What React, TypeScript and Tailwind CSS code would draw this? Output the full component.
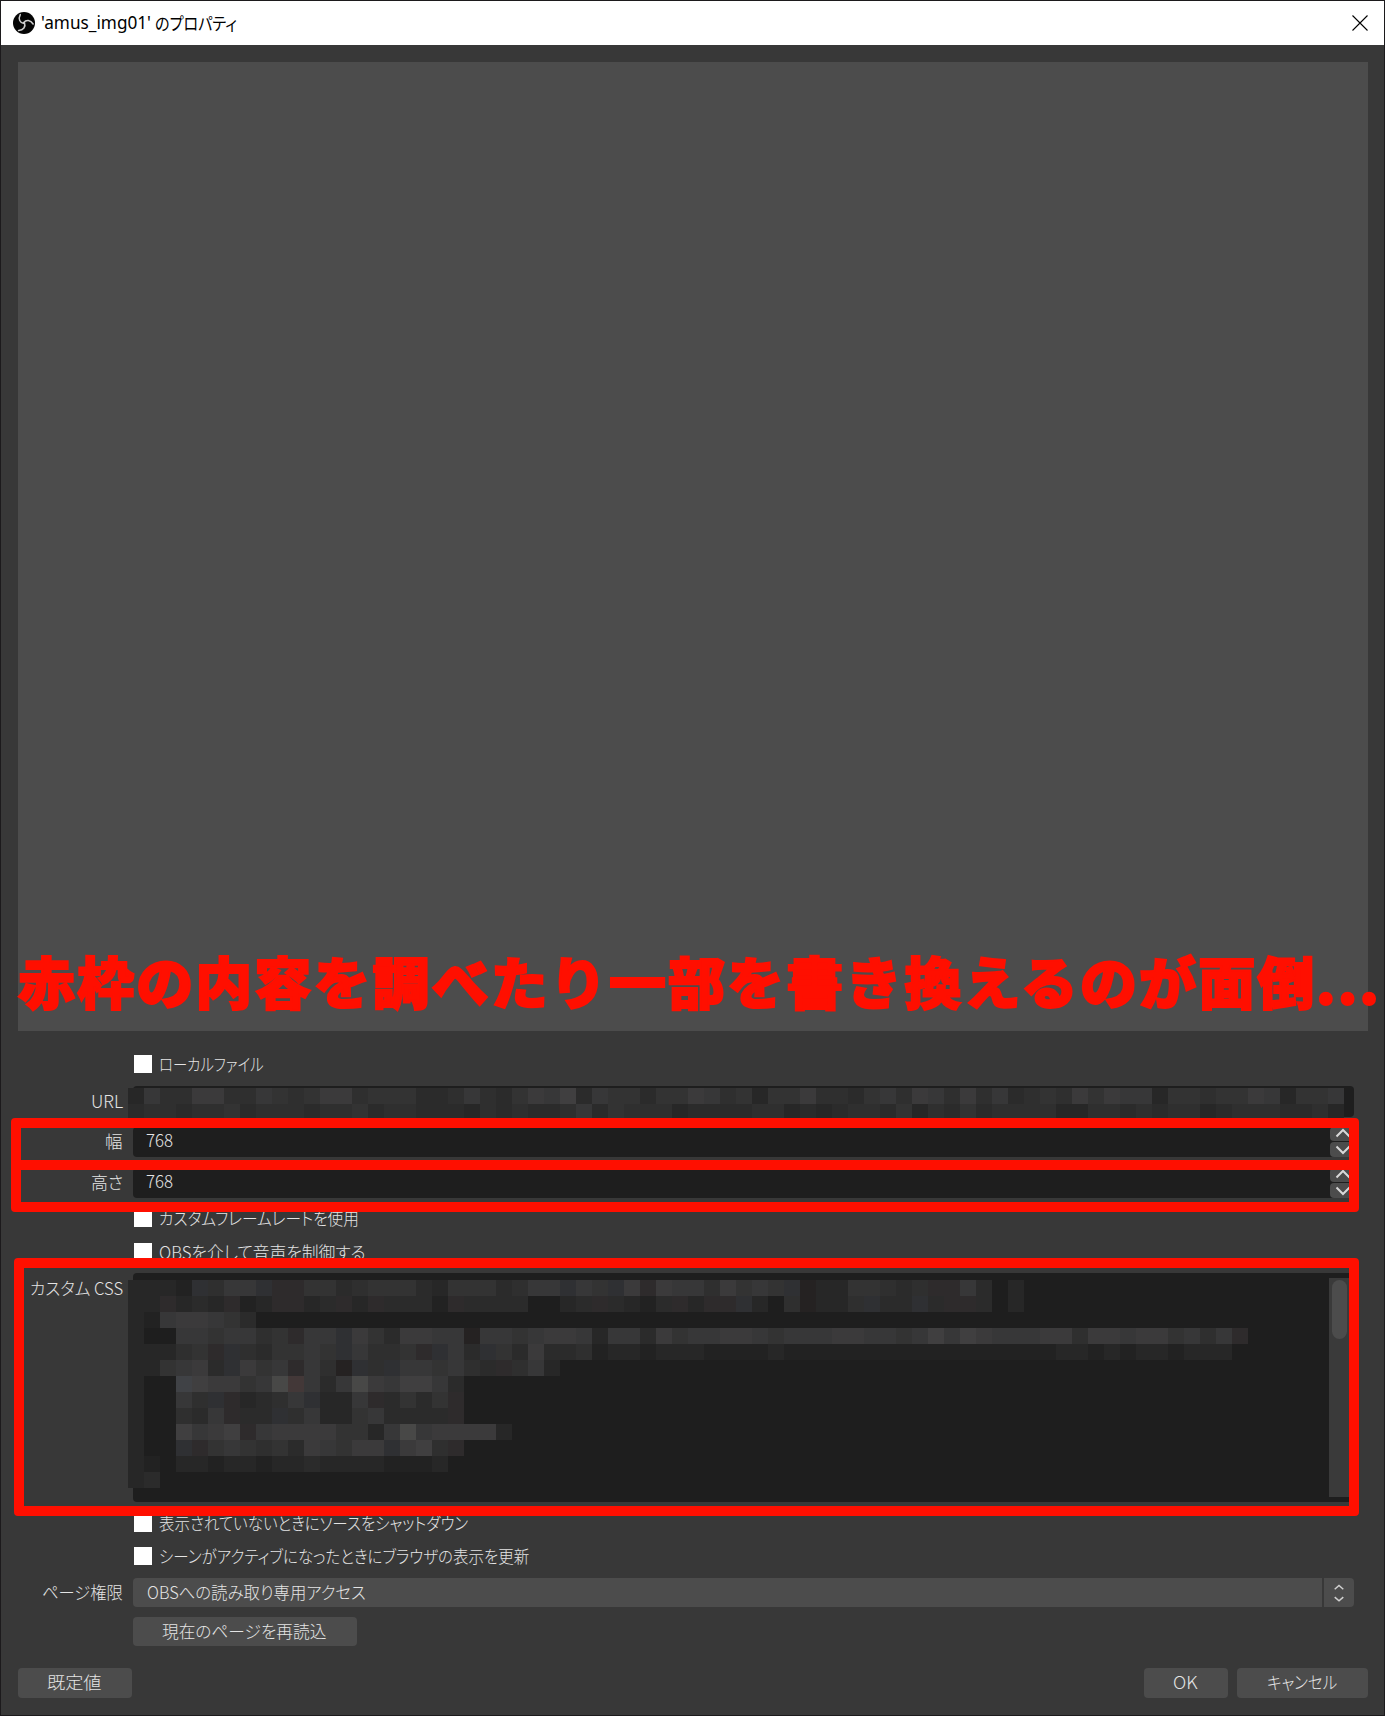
import { useLayoutEffect, useRef, useState } from "react";
import type { ReactNode } from "react";

/** Single line of text condensed or widened to an exact width. */
function Fit({ w, children, className = "pb-0.5" }: { w: number; children: string; className?: string }) {
  const ref = useRef<HTMLSpanElement>(null);
  const [scale, setScale] = useState(1);
  useLayoutEffect(() => {
    if (ref.current) setScale(w / ref.current.offsetWidth);
  }, [w]);
  return (
    <span className={`flex shrink-0 items-center ${className}`} style={{ width: w }}>
      <span
        ref={ref}
        className="block shrink-0 origin-left whitespace-pre"
        style={{ transform: `scaleX(${scale})` }}
      >
        {children}
      </span>
    </span>
  );
}

const SHADES: Record<string, string> = {
  ".": "transparent",
  "0": "#222222",
  "1": "#272727",
  "2": "#2b2b2b",
  "3": "#2f2f2f",
  "4": "#333333",
  "5": "#373738",
  "6": "#3b3a3b",
  "7": "#403f40",
  "8": "#484847",
  b: "#2f3033",
  r: "#2e2b2c",
  q: "#252222",
  B: "#404246",
  R: "#433838",
};

const URL_ROWS = [
  "1533663354346634442235324657254424465341446332453653635234364655144344651445",
  "2332334233323342332221323223524333122223312123324132423333113323233123332231",
];

const CSS_ROWS = [
  "1110b355brr4423444214442355b54b6r65536454bq1144323rr52.1",
  "11r121r01rr12r1r2220r2222..12r2102r1rrb1.3q113b22b2rr2.1",
  "10566542",
  "1..5545534r55b6426655q55456651552645566545556655457576555663665664535r",
  "11134rb324454b5334rb52b4262230110111000010000000000000000011010110111",
  "114562b645r53qb3b554532r351",
  "1..B766458R5258657752",
  "1..53br1235b115r2424r",
  "1..325r22b3511452222r",
  "1..7567r5666644158566661",
  "1..br45434265466b673r",
  "10.11011011211110001",
  "12",
];

function Mosaic({ rows }: { rows: string[] }) {
  return (
    <div className="flex flex-col">
      {rows.map((row, y) => (
        <div key={y} className="flex h-4">
          {row.split("").map((c, x) => (
            <i key={x} className="block size-4 shrink-0" style={{ background: SHADES[c] }} />
          ))}
        </div>
      ))}
    </div>
  );
}

function Row({ label, className, children }: { label?: ReactNode; className: string; children: ReactNode }) {
  return (
    <div className={`flex shrink-0 ${className}`}>
      <div className="mr-[10px] flex w-[122px] shrink-0 justify-end">{label}</div>
      {children}
    </div>
  );
}

function Check({ w, text, className }: { w: number; text: string; className: string }) {
  return (
    <Row className={`h-[18px] items-center ${className}`}>
      <span className="ml-px size-[18px] shrink-0 bg-white" />
      <Fit w={w} className="ml-[7px]">{text}</Fit>
    </Row>
  );
}

function Chevron({ up }: { up?: boolean }) {
  return (
    <svg width="16" height="10" viewBox="0 0 16 10" fill="none" stroke="#d8d8d8" strokeWidth="2">
      <path d={up ? "M1.5 8.5 8 2 14.5 8.5" : "M1.5 1.5 8 8 14.5 1.5"} />
    </svg>
  );
}

function SpinBox() {
  return (
    <div className="flex h-[30px] w-[1221px] justify-between overflow-hidden rounded bg-[#1e1e1e]">
      <Fit w={27} className="ml-[13px] h-[26px]">768</Fit>
      <div className="flex w-6 flex-col gap-px">
        <span className="flex h-[14px] items-end rounded-bl-sm rounded-tl bg-[#4c4c4c] pb-[3px] pl-[5px]">
          <Chevron up />
        </span>
        <span className="flex h-[15px] items-center rounded-bl rounded-tl-sm bg-[#4c4c4c] pl-[5px]">
          <Chevron />
        </span>
      </div>
    </div>
  );
}

function Button({ w, text, className }: { w: number; text: string; className: string }) {
  return (
    <button className={`flex items-center justify-center rounded bg-[#4c4c4c] pr-0.5 ${className}`}>
      <Fit w={w}>{text}</Fit>
    </button>
  );
}

const LOGO_ARM = "M12 12.6C7.8 11.8 6 8 8.3 3.6";

function ObsLogo() {
  return (
    <svg width="24" height="24" viewBox="0 0 24 24">
      <circle cx="12" cy="12" r="11" fill="#050505" />
      <g fill="none" stroke="#cfcfcf" strokeWidth="1.5" strokeLinecap="round">
        <path d={LOGO_ARM} />
        <path d={LOGO_ARM} transform="rotate(120 12 12)" />
        <path d={LOGO_ARM} transform="rotate(240 12 12)" />
      </g>
    </svg>
  );
}

export default function App() {
  return (
    <div className="relative flex h-[1716px] w-[1385px] flex-col overflow-hidden border border-[#1c1a1c] bg-[#383838] font-['Noto_Sans_CJK_JP',sans-serif] text-[17.5px] font-light leading-none text-[#e4e4e4] [font-feature-settings:'palt']">
      <header className="flex h-11 shrink-0 items-center bg-white text-black">
        <span className="ml-[11px]">
          <ObsLogo />
        </span>
        <Fit w={110} className="ml-[5px] pb-px font-['Noto_Sans','Noto_Sans_CJK_JP',sans-serif] font-normal">'amus_img01'</Fit>
        <Fit w={82} className="ml-[4px] font-normal">のプロパティ</Fit>
        <svg className="ml-auto mr-4" width="16" height="16" viewBox="0 0 16 16" stroke="#000" strokeWidth="1.1">
          <path d="M.5.5 15.5 15.5M15.5.5.5 15.5" />
        </svg>
      </header>

      <main className="mx-[17px] mt-[17px] flex h-[969px] w-[1350px] shrink-0 flex-col justify-end bg-[#4c4c4c]">
        <h1 className="mb-5 flex h-[60px] items-center text-[56px] font-black tracking-[2px] text-[#ff0f00] [-webkit-text-stroke:2px_#ff0f00] [font-feature-settings:normal] [stroke-linejoin:round]">
          <Fit w={1298}>赤枠の内容を調べたり一部を書き換えるのが面倒</Fit>
          <Fit w={65}>...</Fit>
        </h1>
      </main>

      <Check className="mt-6" w={105} text="ローカルファイル" />
      <Row className="mt-[13px] h-[31px] items-center" label={<Fit w={32}>URL</Fit>}>
        <div className="relative h-[31px] w-[1221px] rounded bg-[#1e1e1e]">
          <div className="absolute -left-[5px] top-0.5">
            <Mosaic rows={URL_ROWS} />
          </div>
        </div>
      </Row>
      <Row className="mt-[10px] h-[30px] items-center" label={<Fit w={18}>幅</Fit>}>
        <SpinBox />
      </Row>
      <Row className="mt-[11px] h-[30px] items-center" label={<Fit w={32}>高さ</Fit>}>
        <SpinBox />
      </Row>
      <Check className="mt-[11px]" w={200} text="カスタムフレームレートを使用" />
      <Check className="mt-4" w={207} text="OBSを介して音声を制御する" />
      <Row
        className="mt-3 h-[229px]"
        label={<Fit w={93} className="mt-[6px] h-[18px]">カスタム CSS</Fit>}
      >
        <div className="relative flex h-[229px] w-[1221px] justify-end rounded bg-[#1e1e1e] py-[5px] pr-[5px]">
          <div className="absolute -left-[5px] top-[7px]">
            <Mosaic rows={CSS_ROWS} />
          </div>
          <div className="flex w-5 justify-center bg-[#3a3a3a] pt-0.5">
            <div className="h-[59px] w-[15px] rounded-full bg-[#4c4c4c]" />
          </div>
        </div>
      </Row>
      <Check className="mt-3" w={309} text="表示されていないときにソースをシャットダウン" />
      <Check className="mt-[15px]" w={370} text="シーンがアクティブになったときにブラウザの表示を更新" />
      <Row className="mt-[13px] h-[29px] items-center" label={<Fit w={81}>ページ権限</Fit>}>
        <div className="flex h-[29px] w-[1221px] gap-0.5 overflow-hidden rounded">
          <div className="flex flex-1 items-center bg-[#4c4c4c] pl-[14px]">
            <Fit w={219}>OBSへの読み取り専用アクセス</Fit>
          </div>
          <div className="flex w-[30px] items-center justify-center bg-[#4c4c4c]">
            <svg width="10" height="18" viewBox="0 0 10 18" fill="none" stroke="#d0d0d0" strokeWidth="1.5">
              <path d="M.7 5.2 5 1.5 9.3 5.2M.7 13.2 5 16.8 9.3 13.2" />
            </svg>
          </div>
        </div>
      </Row>
      <Row className="mt-[10px] h-[29px]">
        <Button w={164} text="現在のページを再読込" className="h-[29px] w-[224px]" />
      </Row>
      <footer className="ml-[17px] mr-4 mt-[22px] flex h-[30px] shrink-0 gap-[9px]">
        <Button w={55} text="既定値" className="mr-auto w-[114px]" />
        <Button w={25} text="OK" className="w-[84px]" />
        <Button w={70} text="キャンセル" className="w-[131px]" />
      </footer>

      <div className="absolute left-[10px] top-[1117px] h-[52px] w-[1348px] rounded-[4px] border-[10px] border-[#ff0f00]" />
      <div className="absolute left-[10px] top-[1159px] h-[52px] w-[1348px] rounded-[4px] border-[10px] border-[#ff0f00]" />
      <div className="absolute left-[13px] top-[1257px] h-[258px] w-[1345px] rounded-[4px] border-[10px] border-[#ff0f00]" />
    </div>
  );
}
